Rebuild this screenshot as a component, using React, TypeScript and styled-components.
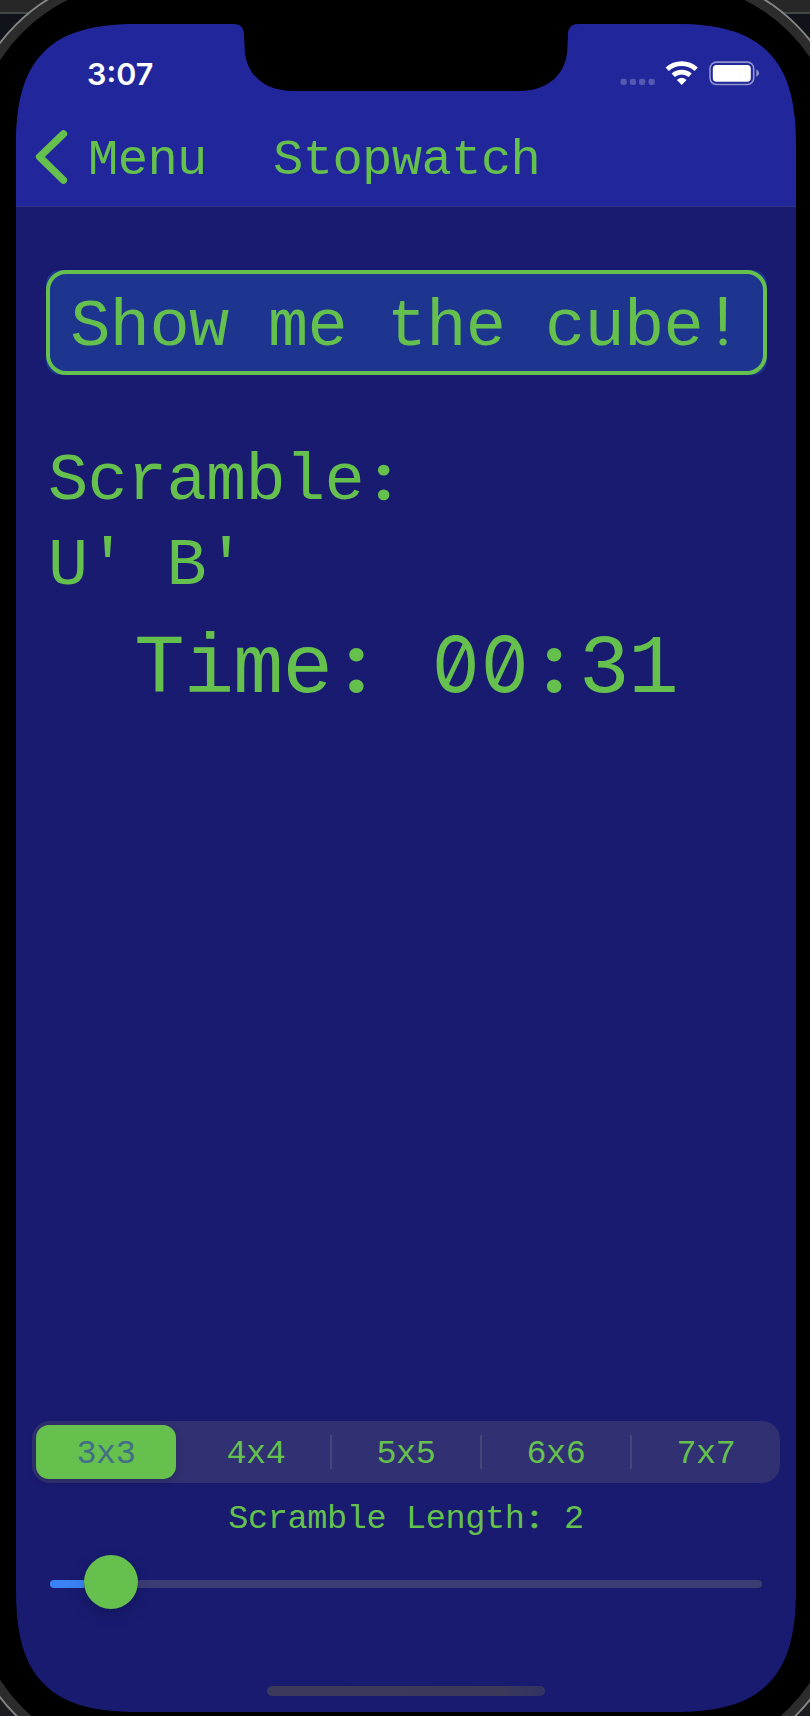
import React from "react";
import styled, { createGlobalStyle } from "styled-components";

const green = "#65c04d";
const mono = '"Liberation Mono", monospace';

const GlobalStyle = createGlobalStyle`
  * { box-sizing: border-box; }
  html, body { margin: 0; padding: 0; background: #11141b; }
  button { appearance: none; margin: 0; padding: 0; border: 0; background: none; }
`;

const Desktop = styled.div`
  width: 810px;
  height: 1716px;
  overflow: hidden;
  background: linear-gradient(#272728 0 12px, #454648 12px 14px, #10131a 14px 120px, #1c1c20 1500px);
`;

const Device = styled.div`
  width: 886px;
  height: 1796px;
  margin: -28px 0 0 -37px;
  padding: 50px 51px 0;
  border: 2px solid #858585;
  border-radius: 178px;
  background: #000;
  box-shadow: inset 0 0 0 9px #2c2c2c;
`;

/* Rounded display outline with the sensor notch cut out of the top edge. */
const screenShape =
  "M0 122 C0 75 9 47 28 28 C47 9 75 0 122 0 H217 C225 0 228 4 228 12 L228.5 24 " +
  "C229 49 247 67 276 67 H504 C533 67 551 49 551.5 24 L552 12 C552 4 555 0 563 0 " +
  "H658 C705 0 733 9 752 28 C771 47 780 75 780 122 V1566 C780 1613 771 1641 752 1660 " +
  "C733 1679 705 1688 658 1688 H122 C75 1688 47 1679 28 1660 C9 1641 0 1613 0 1566 Z";

const Screen = styled.div`
  display: flex;
  flex-direction: column;
  width: 780px;
  height: 1688px;
  background: #181b6f;
  clip-path: path("${screenShape}");
`;

const Header = styled.header`
  height: 183px;
  background: #21269a;
  border-bottom: 1px solid #30357f;
`;

const StatusBar = styled.div`
  display: flex;
  justify-content: space-between;
  height: 106px;
  padding: 32px 36px 0 71px;
`;

const Clock = styled.span`
  font: 600 30.5px/36px Inter, sans-serif;
  color: #fff;
`;

const StatusIcons = styled.svg`
  width: 142px;
  height: 36px;
`;

const NavBar = styled.nav`
  display: grid;
  grid-template-columns: 238px auto;
  justify-content: start;
  height: 60px;
  padding-left: 19px;
`;

const BackButton = styled.button`
  display: flex;
  align-items: flex-start;
  gap: 19px;
  height: 62px;
`;

const BackChevron = styled.svg`
  width: 34px;
  height: 56px;
`;

const MonoText = styled.span<{ $size: number; $advance: number; $line: number }>`
  display: block;
  height: ${(p) => p.$line}px;
  font-family: ${mono};
  font-size: ${(p) => p.$size}px;
  line-height: ${(p) => p.$line}px;
  letter-spacing: ${(p) => p.$advance - p.$size * 0.6001}px;
  color: ${green};
  white-space: pre;
`;

/* Glyphs borrowed from a second face, fitted to one monospace cell. */
const Cell = styled.span<{ $advance: number }>`
  display: inline-block;
  width: ${(p) => p.$advance}px;
  line-height: 0;
  letter-spacing: 0;
  text-align: center;
`;

const RoundMark = styled(Cell)<{ $bold: boolean }>`
  font-family: Roboto, sans-serif;
  font-size: ${(p) => (p.$bold ? "0.93em" : "1em")};
  font-weight: ${(p) => (p.$bold ? 700 : 400)};
  -webkit-text-stroke: ${(p) => (p.$bold ? "0.025em" : "0")} currentColor;
`;

const SlashedZero = styled(Cell)`
  font-family: Inter, sans-serif;
  font-size: 0.915em;
  font-feature-settings: "zero" 1;
  transform: scaleX(0.97);
`;

const Content = styled.main`
  display: flex;
  flex: 1;
  flex-direction: column;
  padding: 63px 0 16px;
`;

const CubeButton = styled.button`
  width: 721px;
  height: 105px;
  margin-left: 30px;
  border-radius: 14px;
  background: #1d358f;
`;

const CubeOutline = styled.span`
  display: flex;
  justify-content: center;
  height: 105px;
  padding-top: 5px;
  border: 4px solid ${green};
  border-radius: 20px;
`;

const Scramble = styled.section`
  margin: 64px 0 16px 32px;
`;

const Timer = styled.div`
  display: flex;
  justify-content: center;
`;

const Controls = styled.footer`
  display: flex;
  flex-direction: column;
  align-items: center;
  margin-top: auto;
`;

const Segments = styled.div`
  display: grid;
  grid-template-columns: 150px repeat(3, 150px) 148px;
  grid-template-rows: 62px;
  width: 748px;
  height: 62px;
  border-radius: 18px;
  background: #303072;
`;

const Segment = styled.button<{ $selected: boolean; $divided: boolean }>`
  display: flex;
  align-items: center;
  justify-content: center;
  margin: ${(p) => (p.$selected ? "4px 6px 4px 4px" : "14px 0")};
  padding-top: 4px;
  border-radius: ${(p) => (p.$selected ? "13px" : "0")};
  border-right: ${(p) => (p.$divided ? "2px solid #454679" : "0")};
  background: ${(p) => (p.$selected ? green : "none")};
  box-shadow: ${(p) => (p.$selected ? "0 2px 8px rgba(0, 0, 0, .14)" : "none")};
  ${MonoText} { color: ${(p) => (p.$selected ? "#426f87" : green)}; }
`;

const LengthLabel = styled.div`
  margin-top: 6px;
`;

const Slider = styled.div`
  display: flex;
  align-items: center;
  width: 712px;
  height: 54px;
  margin-top: 6px;
`;

const Track = styled.span<{ $filled?: boolean }>`
  width: ${(p) => (p.$filled ? "34px" : "auto")};
  flex: ${(p) => (p.$filled ? "none" : "1")};
  height: 8px;
  margin-top: 4px;
  border-radius: ${(p) => (p.$filled ? "4px 0 0 4px" : "0 4px 4px 0")};
  background: ${(p) => (p.$filled ? "#3c82f7" : "#3b3d73")};
`;

const Thumb = styled.span`
  z-index: 1;
  width: 54px;
  height: 54px;
  border-radius: 50%;
  background: ${green};
  box-shadow: 0 6px 18px rgba(0, 0, 0, .12), 0 2px 4px rgba(0, 0, 0, .08);
`;

const HomeIndicator = styled.div`
  width: 278px;
  height: 10px;
  margin-top: 77px;
  border-radius: 5px;
  background: linear-gradient(90deg, #3b3a5b, #3a3959 85%, #323264);
`;

const sizes = ["3x3", "4x4", "5x5", "6x6", "7x7"];

interface LabelProps {
  text: string;
  size: number;
  advance: number;
  line: number;
}

function Label({ text, size, advance, line }: LabelProps) {
  return (
    <MonoText $size={size} $advance={advance} $line={line}>
      {text.split(/([:!0])/).map((part, i) => {
        if (part === "0") return <SlashedZero key={i} $advance={advance}>0</SlashedZero>;
        if (part === ":" || part === "!") {
          return <RoundMark key={i} $advance={advance} $bold={part === ":"}>{part}</RoundMark>;
        }
        return part;
      })}
    </MonoText>
  );
}

function StatusGlyphs() {
  return (
    <StatusIcons viewBox="0 0 142 36" fill="#fff">
      {[2.5, 11.8, 21, 30.5].map((x) => (
        <rect key={x} x={x} y="22.7" width="6.3" height="6.3" rx="2.3" opacity=".24" />
      ))}
      <g fill="none" stroke="#fff" strokeWidth="4.8">
        <path d="M49.2 13.2 A21.5 21.5 0 0 1 78.2 13.2" />
        <path d="M55.2 19.2 A13 13 0 0 1 72.2 19.2" />
      </g>
      <path d="M63.7 28.9 L59.2 24.2 Q58.9 23.8 59.4 23.4 Q63.7 20.3 68 23.4 Q68.5 23.8 68.2 24.2Z" />
      <rect x="92" y="6.1" width="43.7" height="22.4" rx="6.4" fill="none" stroke="#9092cd" strokeWidth="1.6" />
      <rect x="94.8" y="9" width="38" height="16.7" rx="3.8" />
      <path d="M138.3 13.3 Q141 15 141 17.3 Q141 19.6 138.3 21Z" fill="#9092cd" />
    </StatusIcons>
  );
}

export default function App() {
  return (
    <>
      <GlobalStyle />
      <Desktop>
        <Device>
          <Screen>
            <Header>
              <StatusBar>
                <Clock>3:07</Clock>
                <StatusGlyphs />
              </StatusBar>
              <NavBar>
                <BackButton>
                  <BackChevron viewBox="0 0 34 56" fill="none" stroke={green} strokeWidth="7.4" strokeLinecap="round" strokeLinejoin="round">
                    <path d="M28.4 3.9 L4.6 26.8 L28.4 50.1" />
                  </BackChevron>
                  <Label text="Menu" size={50.5} advance={29.7} line={61} />
                </BackButton>
                <Label text="Stopwatch" size={50.5} advance={29.7} line={61} />
              </NavBar>
            </Header>
            <Content>
              <CubeButton>
                <CubeOutline>
                  <Label text="Show me the cube!" size={67} advance={39.55} line={97} />
                </CubeOutline>
              </CubeButton>
              <Scramble>
                <Label text="Scramble:" size={67} advance={39.5} line={85} />
                <Label text="U' B'" size={67} advance={39.5} line={85} />
              </Scramble>
              <Timer>
                <Label text="Time: 00:31" size={84} advance={49.4} line={90} />
              </Timer>
              <Controls>
                <Segments>
                  {sizes.map((size, i) => (
                    <Segment key={size} $selected={i === 0} $divided={i > 0 && i < 4}>
                      <Label text={size} size={33.5} advance={19.75} line={30} />
                    </Segment>
                  ))}
                </Segments>
                <LengthLabel>
                  <Label text="Scramble Length: 2" size={33.5} advance={19.75} line={60} />
                </LengthLabel>
                <Slider>
                  <Track $filled />
                  <Thumb />
                  <Track />
                </Slider>
                <HomeIndicator />
              </Controls>
            </Content>
          </Screen>
        </Device>
      </Desktop>
    </>
  );
}
